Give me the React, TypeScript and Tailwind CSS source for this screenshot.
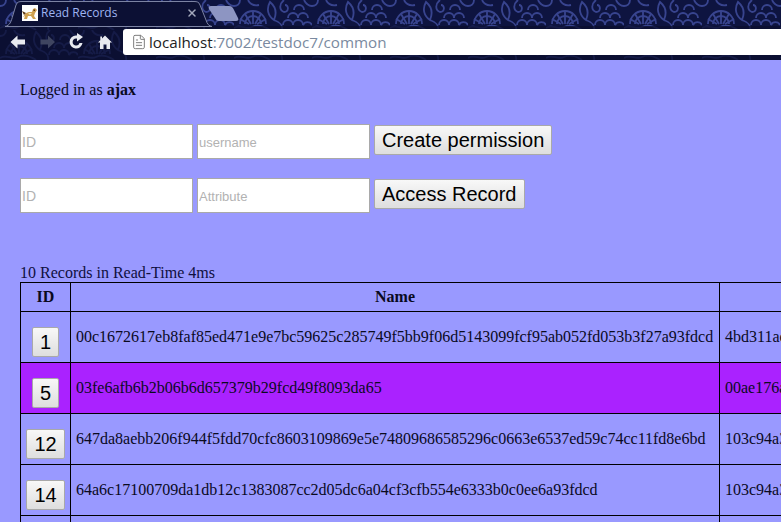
import { FileText, X } from "lucide-react";

const records = [
  { id: 1, name: "00c1672617eb8faf85ed471e9e7bc59625c285749f5bb9f06d5143099fcf95ab052fd053b3f27a93fdcd", next: "4bd311ac94a3", hit: false },
  { id: 5, name: "03fe6afb6b2b06b6d657379b29fcd49f8093da65", next: "00ae176a94a3", hit: true },
  { id: 12, name: "647da8aebb206f944f5fdd70cfc8603109869e5e74809686585296c0663e6537ed59c74cc11fd8e6bd", next: "103c94a3bd31", hit: false },
  { id: 14, name: "64a6c17100709da1db12c1383087cc2d05dc6a04cf3cfb554e6333b0c0ee6a93fdcd", next: "103c94a3bd31", hit: false },
  { id: 15, name: "", next: "", hit: false },
];

function FlowerTile({ id, stroke }: { id: string; stroke: string }) {
  return (
    <pattern id={id} width="78" height="30" patternUnits="userSpaceOnUse">
      <g fill="none" stroke={stroke} strokeWidth="1.8">
        <path d="M6 24A13 13 0 0 1 32 24M11 24A8 8 0 0 1 27 24" />
        <path d="M19 11V24M11 14 17 24M27 14 21 24M6 19 15 24M32 19 23 24" />
        <path d="M36 2C42 7 43 13 40 20C34 16 32 9 36 2ZM40 20C46 22 49 26 48 30M50 0C45 4 45 10 50 12C55 12 55 5 51 5" />
        <path d="M54 18A5 5 0 0 1 64 18A5 5 0 0 1 74 18M49 25A5 5 0 0 1 59 25A5 5 0 0 1 69 25A5 5 0 0 1 78 25M60 10A5 5 0 0 1 70 10" />
        <path d="M0 28C6 24 12 30 18 27S30 26 36 30M70 0C72 4 75 6 78 6M0 6C3 6 6 4 6 0M14 0C16 4 20 6 25 5" />
      </g>
    </pattern>
  );
}

// the theme's flower print, bright on the tab strip and faint behind the toolbar
function ChromePattern() {
  return (
    <svg className="absolute inset-0 h-full w-full" aria-hidden="true">
      <defs>
        <FlowerTile id="flowers-bright" stroke="#38448f" />
        <FlowerTile id="flowers-faint" stroke="#151b47" />
      </defs>
      <rect width="100%" height="26" fill="#0e1440" />
      <rect width="100%" height="26" fill="url(#flowers-bright)" />
      <rect y="26" width="100%" height="34" fill="#0b0f32" />
      <rect y="26" width="100%" height="34" fill="url(#flowers-faint)" />
    </svg>
  );
}

function TabShape() {
  return (
    <svg className="absolute left-0 top-0" width="240" height="27" viewBox="0 0 240 27" aria-hidden="true">
      <path d="M5 26.500C10 25.500 11 22 13 15L16 5C17 2 19 1.500 22 1.500H194C197 1.500 199 2 200 5L206 20C207 24 209 26 212 26.500H5Z" fill="#0c1034" stroke="#7c83a3" strokeWidth="1" />
      <path d="M211 6H229C232 6 233 8 234 10L238 18C239 20 238 21 236 21H219C217 21 216 20 215 18L209 9C208 7 209 6 211 6Z" fill="#8d95c2" />
    </svg>
  );
}

function Favicon() {
  return (
    <svg width="16" height="16" viewBox="0 0 16 16" aria-hidden="true">
      <rect width="16" height="16" fill="#fff" />
      <path d="M1 12 4 8 7 7 10 7 11 4 13 3 15 5 13 8 12 11 14 14H11L9 11 6 11 5 14H2L3 11Z" fill="#d0a050" />
      <path d="M0 6 4 8 2 10ZM11.500 4.500H13V6H11.500Z" fill="#5a3512" />
      <path d="M6 8H10L8 10Z" fill="#f4e8bb" />
    </svg>
  );
}

function NavIcon({ d, color }: { d: string; color: string }) {
  return (
    <svg width="18" height="18" viewBox="0 0 18 18" aria-hidden="true">
      <path d={d} fill={color} />
    </svg>
  );
}

function Browser() {
  return (
    <header className="relative h-[60px] shrink-0 overflow-hidden font-['Open_Sans',sans-serif]">
      <ChromePattern />
      <div className="relative h-[29px]">
        <TabShape />
        <div className="relative flex h-[26px] w-[198px] items-center pl-[22px]">
          <Favicon />
          <span className="ml-[3px] text-[12px] leading-none text-[#9fb4f2]">Read Records</span>
          <X className="ml-auto text-[#a3a8bc]" size={12} strokeWidth={3} />
        </div>
      </div>
      <div className="relative flex h-[26px] items-center pl-[9px]">
        <NavIcon color="#e8eaf0" d="M1.500 9 8.500 2.500V6.500H16V11.500H8.500V15.500Z" />
        <div className="w-[11px]" />
        <NavIcon color="#3f4560" d="M17 9 10 2.500V6.500H2.500V11.500H10V15.500Z" />
        <div className="w-[11px]" />
        <NavIcon color="#e8eaf0" d="M9 2.500A6.500 6.500 0 1 0 15.500 10H12.500A3.500 3.500 0 1 1 9 5.500H10V8.500L16 4 10 0V2.500Z" />
        <div className="w-[11px]" />
        <NavIcon color="#e8eaf0" d="M9 2.500 16 9.500H14V16H10.500V11.500H7.500V16H4V9.500H2L4.300 7.200V3.500H6V5.500Z" />
        <div className="ml-[9px] flex h-[26px] flex-1 items-center rounded-l-[3px] bg-white pl-[8px]">
          <FileText className="text-[#7d7d7d]" size={16} strokeWidth={1.5} />
          <span className="ml-[2px] pt-[1px] text-[15.200px] leading-none text-[#222]">
            localhost<span className="text-[#7a8aa0]">:7002/testdoc7/common</span>
          </span>
        </div>
      </div>
    </header>
  );
}

function Field({ placeholder, small }: { placeholder: string; small?: boolean }) {
  return (
    <input
      placeholder={placeholder}
      className={`h-[35px] w-[173px] border border-[#a9a9a9] bg-white px-[1px] font-['Liberation_Sans',sans-serif] placeholder:text-[#b2b2b2] ${small ? "pt-[1px] text-[13px]" : "text-[14px]"}`}
    />
  );
}

function GrayButton({ label, className }: { label: string; className: string }) {
  return (
    <button className={`rounded-[2px] border border-[#a9a9a9] bg-gradient-to-b from-[#f8f8f8] to-[#dedede] font-['Liberation_Sans',sans-serif] text-[20px] leading-none text-black ${className}`}>
      {label}
    </button>
  );
}

function FormRow({ placeholder, label }: { placeholder: string; label: string }) {
  return (
    <div className="flex items-start gap-[4px]">
      <Field placeholder="ID" />
      <Field placeholder={placeholder} small />
      <GrayButton label={label} className="mt-[1px] h-[30px] px-[7px]" />
    </div>
  );
}

export default function App() {
  return (
    <div className="flex h-[522px] w-[781px] flex-col overflow-hidden bg-[#9999ff] font-['Liberation_Serif',serif] text-[16px] text-[#0a0a1e]">
      <Browser />
      <main className="flex flex-col pl-[20px] pt-[21px]">
        <p className="h-[18px] leading-[18px]">
          Logged in as <b>ajax</b>
        </p>
        <div className="mt-[25px] flex flex-col gap-[19px]">
          <FormRow placeholder="username" label="Create permission" />
          <FormRow placeholder="Attribute" label="Access Record" />
        </div>
        <p className="mt-[51px] h-[18px] leading-[18px] text-[#0f0f40]">10 Records in Read-Time 4ms</p>
        <table className="w-[900px] table-fixed border-collapse border border-black">
          <colgroup>
            <col className="w-[50px]" />
            <col className="w-[649px]" />
            <col />
          </colgroup>
          <thead>
            <tr className="h-[29px]">
              <th className="border border-black p-0 text-center">ID</th>
              <th className="border border-black p-0 text-center">Name</th>
              <th className="border border-black p-0 text-center"></th>
            </tr>
          </thead>
          <tbody>
            {records.map((r) => (
              <tr key={r.id} className={`h-[51px] ${r.hit ? "bg-[#aa22ff]" : ""}`}>
                <td className="border border-black p-0 text-center">
                  <GrayButton label={String(r.id)} className="mt-[10px] h-[30px] px-[7px]" />
                </td>
                <td className="whitespace-nowrap border border-black py-0 pb-[1px] pl-[5px] pr-0">{r.name}</td>
                <td className="whitespace-nowrap border border-black py-0 pb-[1px] pl-[5px] pr-0">{r.next}</td>
              </tr>
            ))}
          </tbody>
        </table>
      </main>
    </div>
  );
}
